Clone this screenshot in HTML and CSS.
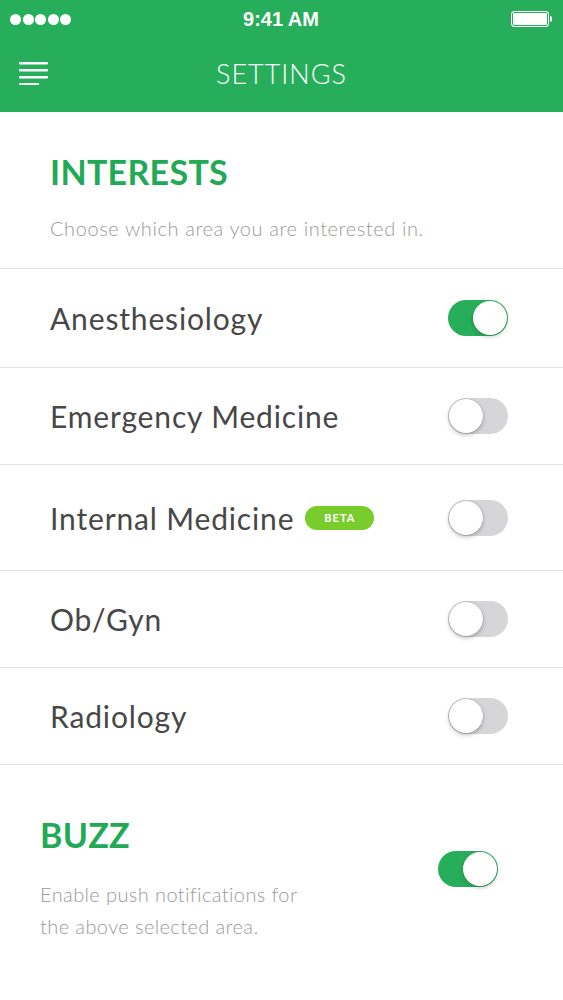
FILE: index.html
```html
<!DOCTYPE html>
<html lang="en">
<head>
    <meta charset="UTF-8">
    <meta name="viewport" content="width=device-width, initial-scale=1.0">
    <title>Settings</title>
    <link rel="stylesheet" href="styles.css">
</head>
<body>
    <header class="header">
        <div class="status-bar">
            <div class="signal">
                <span></span><span></span><span></span><span></span><span></span>
            </div>
            <div class="time">9:41 AM</div>
            <div class="battery"><div class="battery-fill"></div></div>
        </div>
        <div class="navbar">
            <svg class="menu-icon" width="30" height="24" viewBox="0 0 30 24">
                <rect x="0" y="1" width="29" height="2.4" rx="1" fill="#fff"/>
                <rect x="0" y="8" width="29" height="2.4" rx="1" fill="#fff"/>
                <rect x="0" y="15" width="29" height="2.4" rx="1" fill="#fff"/>
                <rect x="0" y="22" width="20" height="2.4" rx="1" fill="#fff"/>
            </svg>
            <h1 class="title">SETTINGS</h1>
        </div>
    </header>

    <section class="interests">
        <h2 class="section-title">INTERESTS</h2>
        <p class="section-desc">Choose which area you are interested in.</p>
    </section>

    <ul class="list">
        <li class="row row-first">
            <span class="row-label">Anesthesiology</span>
            <div class="toggle on"><div class="knob"></div></div>
        </li>
        <li class="row">
            <span class="row-label">Emergency Medicine</span>
            <div class="toggle"><div class="knob"></div></div>
        </li>
        <li class="row row-tall">
            <span class="row-label">Internal Medicine <span class="badge">BETA</span></span>
            <div class="toggle"><div class="knob"></div></div>
        </li>
        <li class="row">
            <span class="row-label">Ob/Gyn</span>
            <div class="toggle"><div class="knob"></div></div>
        </li>
        <li class="row">
            <span class="row-label">Radiology</span>
            <div class="toggle"><div class="knob"></div></div>
        </li>
    </ul>

    <section class="buzz">
        <div class="buzz-text">
            <h2 class="section-title">BUZZ</h2>
            <p class="buzz-desc">Enable push notifications for<br>the above selected area.</p>
        </div>
        <div class="toggle on"><div class="knob"></div></div>
    </section>
</body>
</html>
```

FILE: styles.css
```css
body {
    margin: 0;
    padding: 0;
    font-family: Lato, 'Open Sans', sans-serif;
    background: #fff;
    color: #444;
}
.header {
    background: #27ae5a;
    color: #fff;
    height: 112px;
}
.status-bar {
    height: 38px;
    display: flex;
    align-items: center;
    justify-content: space-between;
    padding: 0 11px 0 10px;
}
.signal {
    display: flex;
    gap: 1.5px;
    width: 80px;
}
.signal span {
    width: 11px;
    height: 11px;
    border-radius: 50%;
    background: #fff;
}
.time {
    font-size: 20px;
    font-weight: 700;
    font-family: 'Liberation Sans', Arial, sans-serif;
    margin-top: 1px;
}
.battery {
    width: 80px;
    display: flex;
    justify-content: flex-end;
    position: relative;
}
.battery-fill {
    width: 36px;
    height: 14px;
    border: 1.5px solid #fff;
    border-radius: 3px;
    background: #fff;
    margin-right: 3px;
    box-shadow: inset 0 0 0 1px #27ae5a;
}
.battery::after {
    content: '';
    position: absolute;
    right: 0;
    top: 5px;
    width: 2px;
    height: 6px;
    border-radius: 0 2px 2px 0;
    background: #fff;
}
.navbar {
    height: 74px;
    display: flex;
    align-items: center;
    position: relative;
    padding-left: 19px;
}
.menu-icon {
    display: block;
    margin-top: -4px;
}
.title {
    position: absolute;
    left: 0;
    right: 0;
    margin: 0;
    margin-top: -3px;
    text-align: center;
    font-size: 27px;
    font-weight: 300;
    letter-spacing: 1px;
    pointer-events: none;
}
.interests {
    padding: 40px 50px 0;
    height: 116px;
}
.section-title {
    margin: 0;
    font-size: 34px;
    font-weight: 700;
    color: #22a956;
    letter-spacing: 0.3px;
    line-height: 40px;
}
.section-desc {
    margin: 24px 0 0;
    font-size: 20px;
    font-weight: 300;
    letter-spacing: 0.6px;
    color: #9a9a9a;
}
.list {
    list-style: none;
    margin: 0;
    padding: 0;
}
.row {
    display: flex;
    align-items: center;
    justify-content: space-between;
    height: 96px;
    padding: 0 55px 0 50px;
    border-top: 1px solid #e3e3e3;
}
.row-first {
    height: 98px;
}
.row-tall {
    height: 105px;
}
.row:last-child {
    border-bottom: 1px solid #e3e3e3;
}
.row-label {
    font-size: 30px;
    letter-spacing: 0.85px;
    color: #474747;
    display: flex;
    align-items: center;
    gap: 11px;
}
.badge {
    background: #78cc2c;
    color: #fff;
    font-size: 11px;
    font-weight: 700;
    letter-spacing: 1px;
    border-radius: 12px;
    width: 69px;
    height: 24px;
    display: flex;
    align-items: center;
    justify-content: center;
}
.toggle {
    width: 60px;
    height: 36px;
    border-radius: 18px;
    background: #d6d6d9;
    position: relative;
    flex-shrink: 0;
}
.knob {
    position: absolute;
    top: 1px;
    left: 1px;
    width: 34px;
    height: 34px;
    border-radius: 50%;
    background: #fff;
    box-shadow: 0 2px 4px rgba(0, 0, 0, 0.25), 0 0 0 0.5px rgba(0, 0, 0, 0.15);
}
.toggle.on {
    background: #27ae5a;
}
.toggle.on .knob {
    left: 25px;
    box-shadow: 0 2px 4px rgba(0, 0, 0, 0.2);
}
.buzz {
    display: flex;
    align-items: center;
    justify-content: space-between;
    padding: 50px 65px 0 40px;
}
.buzz-desc {
    margin: 23px 0 0;
    font-size: 20px;
    font-weight: 300;
    letter-spacing: 0.4px;
    line-height: 32px;
    color: #9a9a9a;
}
.buzz .toggle {
    margin-bottom: 20px;
}
```
